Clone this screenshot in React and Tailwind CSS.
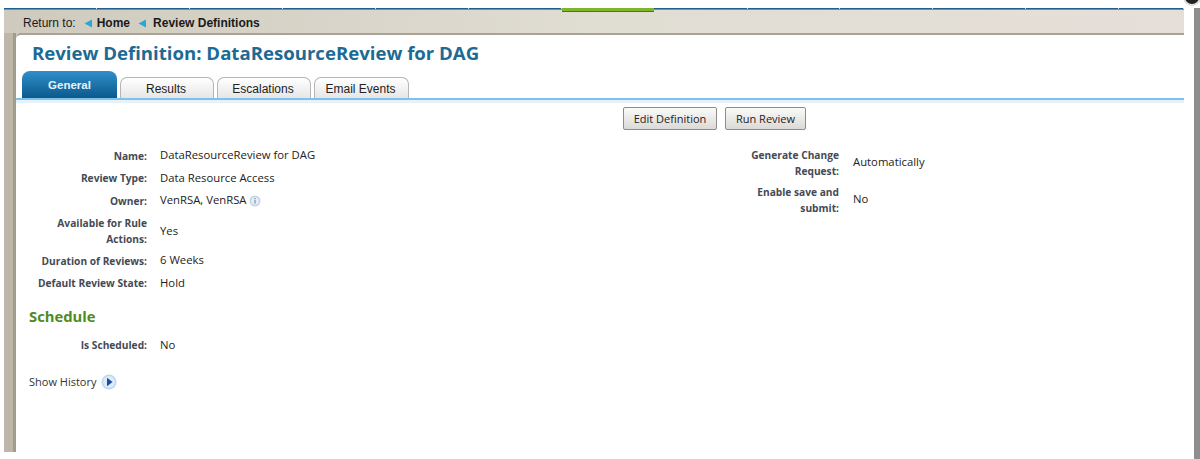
import { Fragment } from "react";

const leftRows = [
  ["Name:", "DataResourceReview for DAG", "h-[23px]"],
  ["Review Type:", "Data Resource Access", "h-[22px]"],
  ["Owner:", "VenRSA, VenRSA", "h-[23px]", true],
  ["Available for Rule Actions:", "Yes", "h-[38px]"],
  ["Duration of Reviews:", "6 Weeks", "h-[21px]"],
  ["Default Review State:", "Hold", "h-[24px]"],
];

const rightRows = [
  ["Generate Change Request:", "Automatically", "h-[37px]"],
  ["Enable save and submit:", "No", "h-[37px]"],
];

const navStops = [93, 93, 93, 93, 93, 93, 92, 94, 92, 93, 93, 93, 65];

function BackArrow() {
  return (
    <svg width="9" height="9" viewBox="0 0 9 9" className="mr-[4px] ml-[8px] shrink-0">
      <path d="M8 0.5V8.5L0.5 4.5Z" fill="#27a9d8" />
    </svg>
  );
}

function InfoIcon() {
  return (
    <svg width="12" height="12" viewBox="0 0 12 12" className="ml-[2px] shrink-0">
      <circle cx="6" cy="6" r="5.5" fill="#c4d5e6" />
      <circle cx="6" cy="6" r="3.8" fill="#e6eef5" />
      <rect x="5.2" y="5" width="1.6" height="3.6" fill="#8faac4" />
      <rect x="5.2" y="3" width="1.6" height="1.3" fill="#8faac4" />
    </svg>
  );
}

function ExpandIcon() {
  return (
    <svg width="16" height="16" viewBox="0 0 16 16" className="ml-[5px] shrink-0">
      <circle cx="8" cy="8" r="7.5" fill="#bcd7f2" />
      <circle cx="8" cy="8" r="6" fill="#dcebfa" />
      <path d="M6 3.8V12.2L11.5 8Z" fill="#1a4f9c" />
    </svg>
  );
}

function Tab({ label, width }) {
  return (
    <div className={`${width} flex h-[21px] items-center justify-center rounded-t-[7px] border border-b-0 border-[#b5b5b5] bg-gradient-to-b from-white to-[#e6e6e6] pt-[2px] pr-[2px] font-['Liberation_Sans',sans-serif] text-[12px] text-[#222]`}>
      {label}
    </div>
  );
}

function Button({ label, width }) {
  return (
    <div className={`${width} flex h-[23px] items-center justify-center rounded-[2px] border border-[#8c8c8c] bg-gradient-to-b from-[#fafafa] to-[#dcdad6] pt-[1px] text-[11px] text-[#222]`}>
      {label}
    </div>
  );
}

function Rows({ rows, columns }) {
  return (
    <div className={`grid ${columns} items-center`}>
      {rows.map(([label, value, height, info]) => (
        <Fragment key={label}>
          <div className={`${height} flex items-center justify-end text-right text-[10.2px] leading-[16px] font-bold text-[#444a55]`}>
            <span>{label}</span>
          </div>
          <div className="flex items-center text-[11.3px] text-[#222]">
            {value}
            {info && <InfoIcon />}
          </div>
        </Fragment>
      ))}
    </div>
  );
}

export default function App() {
  return (
    <div className="flex h-[459px] w-[1200px] overflow-hidden bg-white pt-2 font-['Open_Sans',sans-serif]">
      <div className="ml-1 flex h-[444px] w-[1180px] flex-col">
        {/* top nav strip, mostly cut off */}
        <div className="relative flex h-px shrink-0">
          {navStops.map((w, i) => (
            <div
              key={i}
              className={i === 6 ? "h-[4px] shrink-0 border-b border-[#2f6f8f] bg-[#7fb52c]" : "h-px shrink-0 border-r border-[#cfe0ea] bg-[#1f5f8f]"}
              style={{ width: w }}
            />
          ))}
        </div>

        <div className="flex min-h-0 flex-1 flex-col border-t border-[#8d8a80] bg-gradient-to-r from-[#cfcabd] via-[#e0ddd3] to-[#e6dfd9]">
          <div className="flex h-[23px] shrink-0 items-center pt-[3px] pl-[19px] font-['Liberation_Sans',sans-serif] text-[12px] text-[#1a1a1a]">
            <span>Return to:</span>
            <BackArrow />
            <span className="font-bold">Home</span>
            <BackArrow />
            <span className="ml-[2px] font-bold">Review Definitions</span>
          </div>

          <div className="flex min-h-0 flex-1">
            <div className="w-3 shrink-0 border-r-[3px] border-[#a39c8e] bg-[#bdb7a9]" />
            <div className="flex min-w-0 flex-1 flex-col rounded-tl-[5px] border-t-[2px] border-[#aaa395] bg-white">
              <h1 className="mt-[2px] h-[34px] pl-4 text-[18.6px] leading-[32px] font-bold text-[#1d6a94]">
                Review Definition: DataResourceReview for DAG
              </h1>

              <div className="flex h-[27px] shrink-0 items-end gap-[3px] pl-[6px]">
                <div className="flex h-[27px] w-[95px] items-start justify-center rounded-t-[8px] bg-gradient-to-b from-[#2f8fcb] to-[#0a5a8c] pt-[6px] font-['Liberation_Sans',sans-serif] text-[11.5px] font-bold text-[#e8f2f8]">
                  General
                </div>
                <Tab label="Results" width="w-[94px]" />
                <Tab label="Escalations" width="w-[94px]" />
                <Tab label="Email Events" width="w-[95px]" />
              </div>
              <div className="h-[2px] shrink-0 bg-[#7fc1ea]" />
              <div className="h-[3px] shrink-0 bg-[#e6f2fa]" />

              <div className="flex justify-start gap-[8px] pt-[4px] pl-[607px]">
                <Button label="Edit Definition" width="w-[94px]" />
                <Button label="Run Review" width="w-[81px]" />
              </div>

              <div className="flex pt-[14px]">
                <div className="w-[701px] shrink-0">
                  <Rows rows={leftRows} columns="grid-cols-[131px_1fr] gap-x-[13px]" />
                  <h2 className="mt-[8px] h-[26px] pl-[13px] text-[14.8px] leading-[26px] font-bold text-[#4f8a1e]">
                    Schedule
                  </h2>
                  <div className="mt-[8px] grid grid-cols-[131px_1fr] items-center gap-x-[13px]">
                    <div className="text-right text-[10.2px] font-bold text-[#444a55]">
                      Is Scheduled:
                    </div>
                    <div className="text-[11.3px] text-[#222]">No</div>
                  </div>
                  <div className="mt-[20px] flex items-center pl-[13px] text-[11px] text-[#333]">
                    Show History
                    <ExpandIcon />
                  </div>
                </div>
                <div className="w-[280px] shrink-0">
                  <Rows rows={rightRows} columns="grid-cols-[122px_1fr] gap-x-[14px]" />
                </div>
              </div>
            </div>
          </div>
        </div>
      </div>

      {/* window scrollbar edge */}
      <div className="relative ml-auto w-[6px] shrink-0 self-stretch bg-[#8e8e8e]">
        <div className="absolute -top-[20px] -left-[11px] h-[18px] w-[18px] rounded-full border-2 border-[#ddd] bg-[#222]" />
      </div>
    </div>
  );
}
